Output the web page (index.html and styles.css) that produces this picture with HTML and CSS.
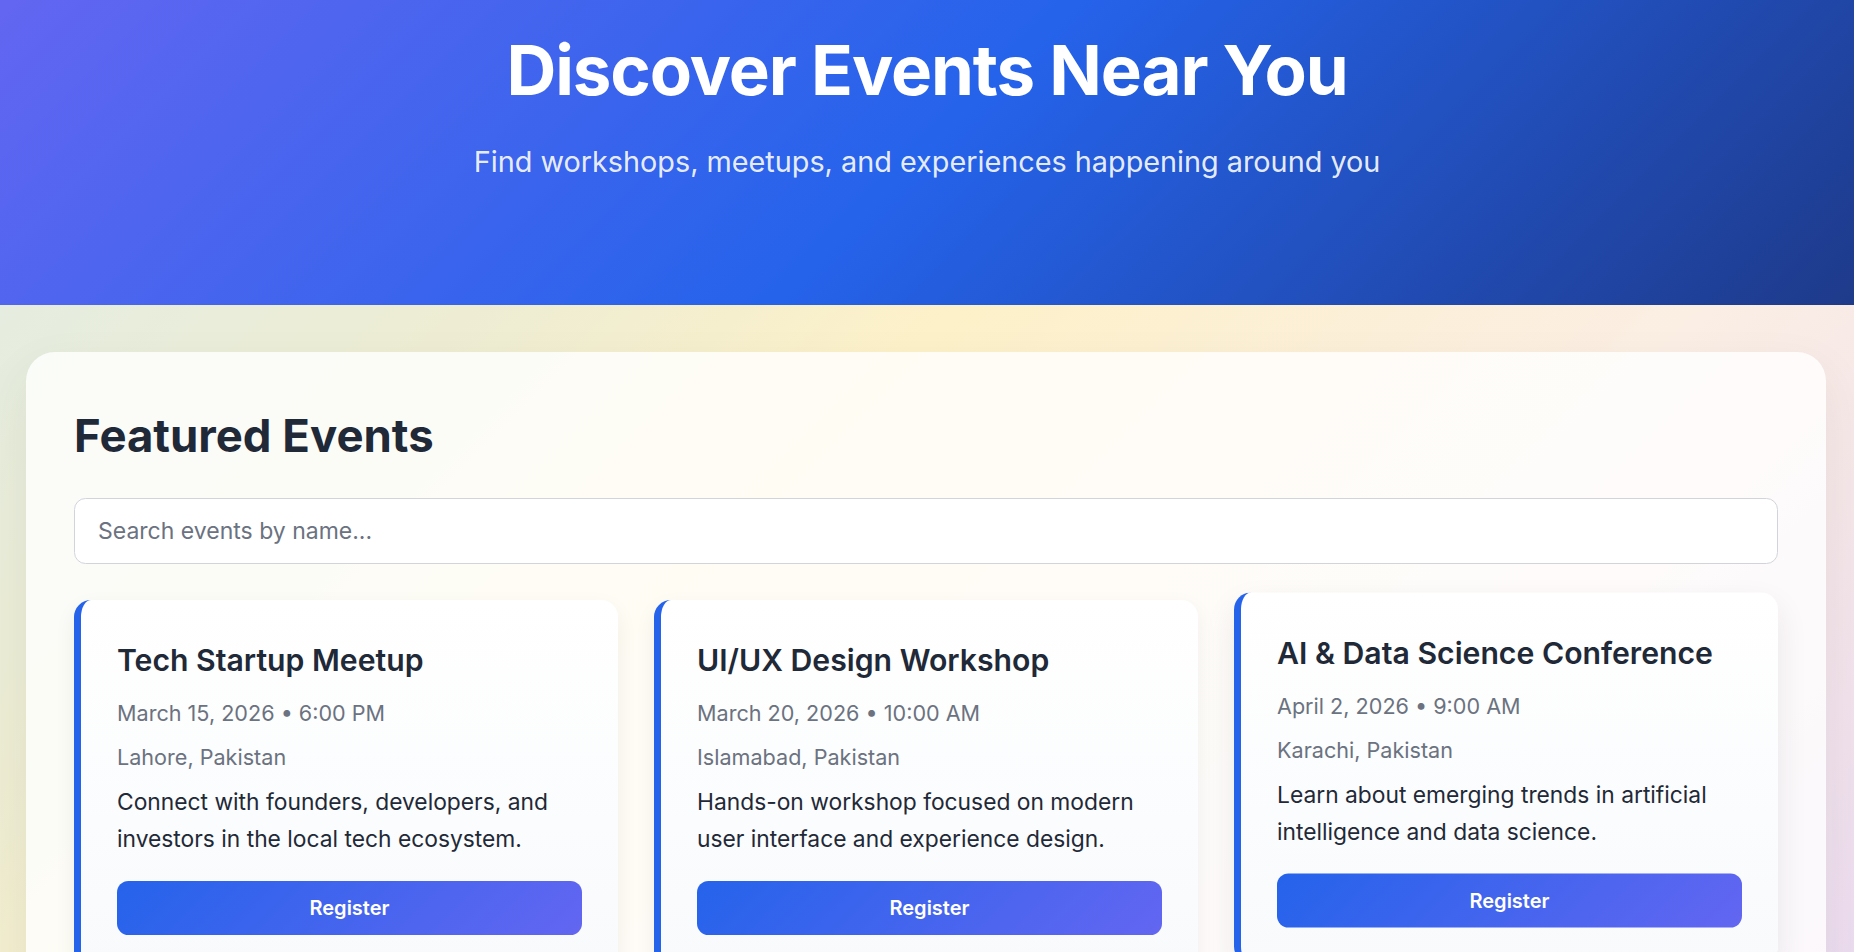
FILE: index.html
```html
<!DOCTYPE html>
<html lang="en">
<head>
<meta charset="utf-8">
<title>Discover Events Near You</title>
<link rel="stylesheet" href="styles.css">
</head>
<body>
<header class="hero">
  <h1 class="hero-title">Discover Events Near You</h1>
  <p class="hero-sub">Find workshops, meetups, and experiences happening around you</p>
</header>
<main class="panel">
  <h2 class="panel-title">Featured Events</h2>
  <input class="search" type="text" placeholder="Search events by name...">
  <section class="grid">
    <article class="card">
      <h3 class="card-title">Tech Startup Meetup</h3>
      <p class="card-date">March 15, 2026 • 6:00 PM</p>
      <p class="card-loc">Lahore, Pakistan</p>
      <p class="card-desc">Connect with founders, developers, and investors in the local tech ecosystem.</p>
      <button class="btn">Register</button>
    </article>
    <article class="card">
      <h3 class="card-title">UI/UX Design Workshop</h3>
      <p class="card-date">March 20, 2026 • 10:00 AM</p>
      <p class="card-loc">Islamabad, Pakistan</p>
      <p class="card-desc">Hands-on workshop focused on modern user interface and experience design.</p>
      <button class="btn">Register</button>
    </article>
    <article class="card card-raised">
      <h3 class="card-title">AI &amp; Data Science Conference</h3>
      <p class="card-date">April 2, 2026 • 9:00 AM</p>
      <p class="card-loc">Karachi, Pakistan</p>
      <p class="card-desc">Learn about emerging trends in artificial intelligence and data science.</p>
      <button class="btn">Register</button>
    </article>
  </section>
</main>
</body>
</html>
```
FILE: styles.css
```css
* { box-sizing: border-box; }
html {
  background: linear-gradient(135deg, #e0ede8 0%, #efedd2 30%, #fdf1c9 45%, #fbeee4 72%, #ecdcf0 100%) fixed;
}
body {
  margin: 0;
  font-family: Inter, "Noto Sans", sans-serif;
  line-height: 1.6;
  color: #1f2937;
  min-height: 100vh;
}
.hero {
  height: 305px;
  padding-top: 29px;
  text-align: center;
  color: #fff;
  background: linear-gradient(135deg, #6366f1 0%, #2563eb 50%, #1e3a8a 100%);
}
.hero-title {
  margin: 0;
  font-size: 69px;
  font-weight: 700;
  line-height: 1.2;
  letter-spacing: -1.1px;
}
.hero-sub {
  margin: 27px 0 0;
  font-size: 28.8px;
  color: rgba(255, 255, 255, 0.9);
}
.panel {
  margin: 47px 28px 0 26px;
  padding: 47px 48px 48px;
  border-radius: 29px;
  background: rgba(255, 255, 255, 0.8);
  box-shadow: 0 20px 50px rgba(60, 60, 40, 0.08);
}
.panel-title {
  margin: 0 0 25px;
  font-size: 45.5px;
  font-weight: 700;
  color: #1f2937;
  line-height: 73.6px;
}
.search {
  display: block;
  width: 100%;
  height: 66px;
  margin: 0 0 36.5px;
  padding: 0 23px;
  font-family: inherit;
  font-size: 23px;
  color: #1f2937;
  background: #fff;
  border: 1px solid #d1d5db;
  border-radius: 11.5px;
  outline: none;
}
.search::placeholder { color: #6b7280; }
.grid {
  display: grid;
  grid-template-columns: repeat(3, 1fr);
  gap: 36px;
  align-items: start;
}
.card {
  padding: 36px;
  border-left: 7px solid #2563eb;
  border-radius: 17px;
  background: linear-gradient(180deg, #ffffff 0%, #f8fafc 100%);
  box-shadow: 0 8px 22px rgba(40, 40, 30, 0.06);
}
.card-raised {
  transform: translateY(-7.5px);
  box-shadow: 0 14px 32px rgba(40, 30, 60, 0.09);
}
.card-title {
  margin: 0 0 12px;
  font-size: 30.2px;
  font-weight: 600;
  line-height: 48px;
  color: #1f2937;
}
.card-date, .card-loc {
  margin: 0;
  font-size: 21.6px;
  line-height: 35.2px;
  color: #6b7280;
}
.card-date { margin-bottom: 8.5px; }
.card-loc { margin-bottom: 9px; }
.card-desc {
  margin: 0 0 23px;
  font-size: 22.8px;
  line-height: 36.8px;
  color: #1f2937;
}
.btn {
  display: block;
  width: 100%;
  padding: 11px 0;
  font-family: inherit;
  font-size: 20px;
  font-weight: 600;
  line-height: 32px;
  color: #fff;
  border: none;
  border-radius: 11.5px;
  background: linear-gradient(135deg, #2563eb 0%, #6366f1 100%);
  cursor: pointer;
}
```
